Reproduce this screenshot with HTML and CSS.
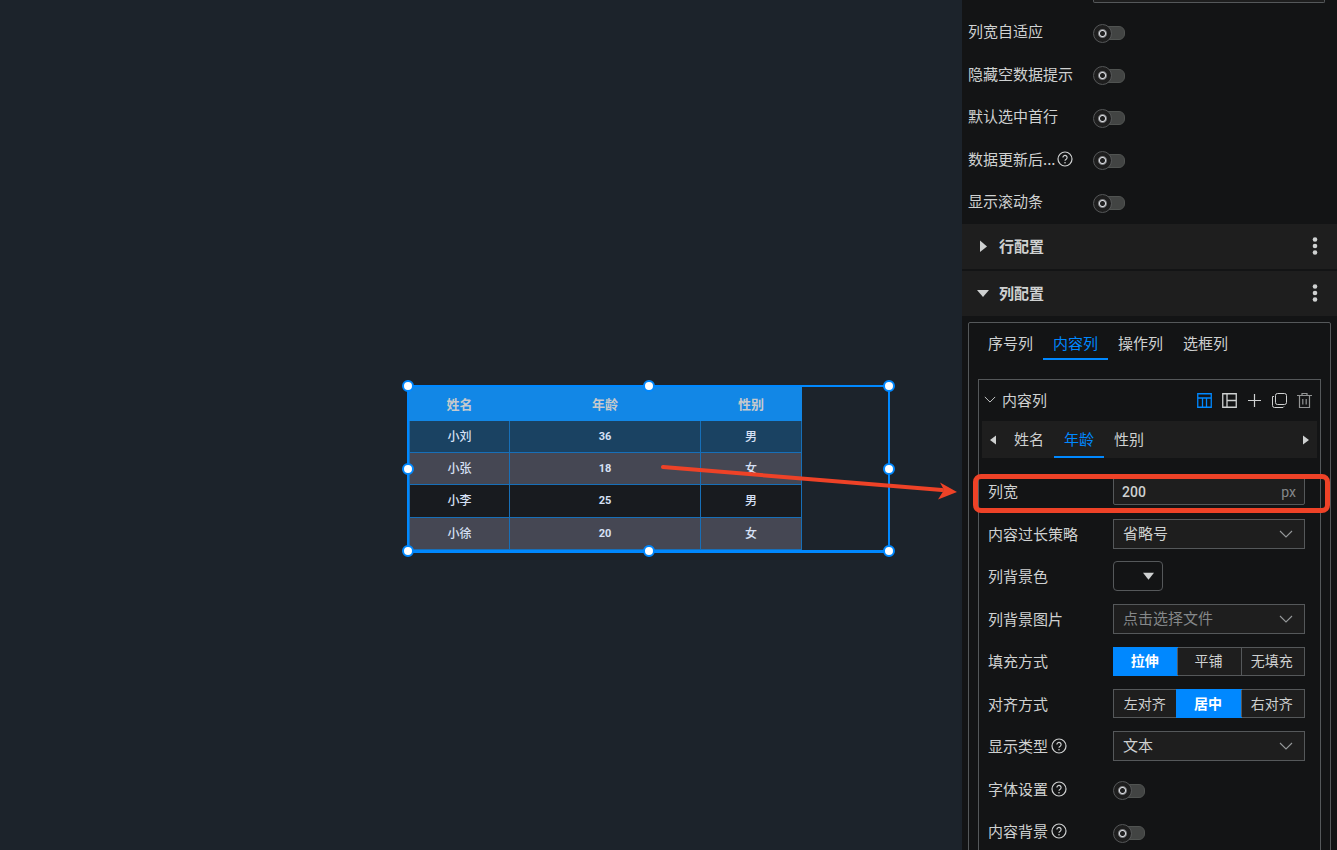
FILE: index.html
```html
<!DOCTYPE html>
<html lang="zh-CN">
<head>
<meta charset="utf-8">
<title>列配置</title>
<link rel="stylesheet" href="styles.css">
</head>
<body>
<svg class="defs" aria-hidden="true">
  <symbol id="help" viewBox="0 0 16 16"><circle cx="8" cy="8" r="7" fill="none" stroke="currentColor" stroke-width="1.2"/><path d="M5.9 6.5a2.1 2.1 0 1 1 3.3 1.7c-.8.5-1.2.8-1.2 1.6" fill="none" stroke="currentColor" stroke-width="1.2"/><circle cx="8" cy="11.8" r=".8" fill="currentColor"/></symbol>
  <symbol id="chevron" viewBox="0 0 14 8"><path d="M1 1l6 6 6-6" fill="none" stroke="currentColor" stroke-width="1.1"/></symbol>
  <symbol id="dots" viewBox="0 0 6 18"><circle cx="3" cy="2.5" r="2.3" fill="currentColor"/><circle cx="3" cy="9" r="2.3" fill="currentColor"/><circle cx="3" cy="15.5" r="2.3" fill="currentColor"/></symbol>
</svg>
<div class="app">
  <main class="canvas">
    <div class="widget">
      <table class="grid">
        <colgroup><col class="c-name"><col class="c-age"><col class="c-sex"></colgroup>
        <thead><tr><th>姓名</th><th>年龄</th><th>性别</th></tr></thead>
        <tbody>
          <tr class="picked"><td>小刘</td><td>36</td><td>男</td></tr>
          <tr class="even"><td>小张</td><td>18</td><td>女</td></tr>
          <tr class="odd"><td>小李</td><td>25</td><td>男</td></tr>
          <tr class="even"><td>小徐</td><td>20</td><td>女</td></tr>
        </tbody>
      </table>
      <i class="handle t l"></i><i class="handle t m"></i><i class="handle t r"></i>
      <i class="handle c l"></i><i class="handle c r"></i>
      <i class="handle b l"></i><i class="handle b m"></i><i class="handle b r"></i>
    </div>
    <svg class="arrow" viewBox="0 0 304 50" aria-hidden="true"><path d="M5 17L284 40" stroke="#ee4227" stroke-width="4" stroke-linecap="round"/><path d="M299 42L282 32.500L286 40L280 49.500Z" fill="#ee4227"/></svg>
  </main>

  <aside class="panel">
    <div class="stub"></div>
    <div class="rows outer">
      <div class="row"><label for="s1">列宽自适应</label><input class="switch" type="checkbox" id="s1"></div>
      <div class="row"><label for="s2">隐藏空数据提示</label><input class="switch" type="checkbox" id="s2"></div>
      <div class="row"><label for="s3">默认选中首行</label><input class="switch" type="checkbox" id="s3"></div>
      <div class="row"><label for="s4">数据更新后...<svg class="help"><use href="#help"/></svg></label><input class="switch" type="checkbox" id="s4"></div>
      <div class="row"><label for="s5">显示滚动条</label><input class="switch" type="checkbox" id="s5"></div>
    </div>

    <div class="section">
      <button class="fold"><svg viewBox="0 0 12 12"><path d="M3 .5L10 6.500L3 12Z" fill="currentColor"/></svg>行配置</button>
      <button class="more" aria-label="更多"><svg><use href="#dots"/></svg></button>
    </div>
    <div class="section">
      <button class="fold"><svg viewBox="0 0 12 12"><path d="M0 3H12L6 10Z" fill="currentColor"/></svg>列配置</button>
      <button class="more" aria-label="更多"><svg><use href="#dots"/></svg></button>
    </div>

    <div class="box">
      <div class="tabs">
        <button>序号列</button><button class="on">内容列</button><button>操作列</button><button>选框列</button>
      </div>
      <div class="inner">
        <div class="head">
          <button class="title"><svg><use href="#chevron"/></svg>内容列</button>
          <div class="tools">
            <button class="blue" aria-label="横向"><svg viewBox="0 0 15 15"><path d="M.75.75h13.500v13.500H.75zM.75 5h13.500M5.500 5v9M9.500 5v9" fill="none" stroke="currentColor" stroke-width="1.300"/></svg></button>
            <button aria-label="纵向"><svg viewBox="0 0 15 15"><path d="M.75.75h13.500v13.500H.75zM5 .75v13.500M5 7.500h9" fill="none" stroke="currentColor" stroke-width="1.300"/></svg></button>
            <button aria-label="添加"><svg viewBox="0 0 15 15"><path d="M7.500 1v13M1 7.500h13" stroke="currentColor" stroke-width="1.200"/></svg></button>
            <button aria-label="复制"><svg viewBox="0 0 15 15"><rect x="3.500" y=".5" width="11" height="11" rx="2" fill="none" stroke="currentColor"/><path d="M2 3.500H.5v9q0 2 2 2h8.500l1-1" fill="none" stroke="currentColor"/></svg></button>
            <button class="dim" aria-label="删除"><svg viewBox="0 0 15 15"><path d="M0 2.500h15M5 2.500V.5h5v2M2.500 2.500v12h10v-12M5.800 6v5.500M9.200 6v5.500" fill="none" stroke="currentColor" stroke-width="1.200"/></svg></button>
          </div>
        </div>
        <div class="strip">
          <button class="step" aria-label="上一个"><svg viewBox="0 0 6 10"><path d="M6 .5v9L0 5Z" fill="currentColor"/></svg></button>
          <div class="names"><button>姓名</button><button class="on">年龄</button><button>性别</button></div>
          <button class="step" aria-label="下一个"><svg viewBox="0 0 6 10"><path d="M0 .5v9L6 5Z" fill="currentColor"/></svg></button>
        </div>
        <div class="rows">
          <div class="row marked"><label for="w">列宽</label><span class="field num"><input id="w" value="200"><span class="unit">px</span></span></div>
          <div class="row"><label for="o">内容过长策略</label><span class="field"><select id="o"><option>省略号</option></select><svg><use href="#chevron"/></svg></span></div>
          <div class="row"><label for="bg">列背景色</label><button id="bg" class="colour"><svg viewBox="0 0 12 8"><path d="M0 .5h12L6 8Z" fill="currentColor"/></svg></button></div>
          <div class="row"><label for="img">列背景图片</label><span class="field"><select id="img" class="empty"><option>点击选择文件</option></select><svg><use href="#chevron"/></svg></span></div>
          <div class="row"><span class="label">填充方式</span><div class="seg"><button class="on">拉伸</button><button>平铺</button><button>无填充</button></div></div>
          <div class="row"><span class="label">对齐方式</span><div class="seg"><button>左对齐</button><button class="on">居中</button><button>右对齐</button></div></div>
          <div class="row"><label for="t">显示类型<svg class="help"><use href="#help"/></svg></label><span class="field"><select id="t"><option>文本</option></select><svg><use href="#chevron"/></svg></span></div>
          <div class="row"><label for="f">字体设置<svg class="help"><use href="#help"/></svg></label><input class="switch" type="checkbox" id="f"></div>
          <div class="row"><label for="cb">内容背景<svg class="help"><use href="#help"/></svg></label><input class="switch" type="checkbox" id="cb"></div>
        </div>
      </div>
    </div>
  </aside>
</div>
</body>
</html>
```

FILE: styles.css
```css
* { box-sizing: border-box; }
body { margin: 0; font: 15px/20px "Noto Sans CJK SC", sans-serif; color: #cfd1d1; background: #131415; }
button, input, select { font: inherit; color: inherit; margin: 0; }
button { padding: 0; border: 0; background: none; cursor: pointer; }
svg { display: block; flex: none; }
.defs { position: absolute; width: 0; height: 0; }
.app { display: flex; height: 100vh; overflow: hidden; }

.canvas { flex: 1; position: relative; background: #1c232b; overflow: hidden; }
.widget { position: absolute; left: 407px; top: 385px; width: 483px; height: 168px; border: 2px solid #0088ff; border-bottom-width: 3px; }
.grid { border-collapse: collapse; table-layout: fixed; width: 392px; font-size: 12px; line-height: 16px; text-align: center; color: #d6e0f5; }
.c-name { width: 100px; }
.c-age { width: 191px; }
.c-sex { width: 101px; }
.grid th, .grid td { padding: 0; border: 1px solid #176fb8; }
.grid th { height: 33px; font-size: 13px; font-weight: 700; color: #c6cacd; background: #1287e6; border-color: #1287e6; }
.grid td { height: 32px; font-family: Roboto, "Noto Sans CJK SC", sans-serif; font-weight: 500; font-size: 12px; background: #181b1f; }
.grid td:nth-child(2) { font-size: 11px; font-weight: 700; }
.grid .picked td { background: #1a4262; }
.grid .even td { background: #454753; }
.grid .odd td { height: 33px; }
.handle { position: absolute; width: 12px; height: 12px; margin: -6px; border: 2px solid #0088ff; border-radius: 50%; background: #fff; }
.t { top: -1px; }
.c { top: 50%; }
.b { bottom: -1px; }
.l { left: -1px; }
.m { left: 50%; }
.r { right: -1px; }
.arrow { position: absolute; right: 0; top: 450px; width: 304px; height: 50px; }

.panel { width: 375px; flex: none; }
.stub { height: 3px; margin: 0 12px 7px 131px; border: 1px solid #55585a; border-top: 0; border-radius: 0 0 2px 2px; background: #1e1e1e; }
.rows { display: grid; grid-auto-rows: 42px 43px; }
.outer { padding: 0 6px; margin-bottom: 2px; }
.row { display: grid; grid-template-columns: 125px 1fr; align-items: center; position: relative; }
.row label, .label { display: flex; align-items: center; gap: 3px; white-space: nowrap; }
.outer label { gap: 1px; }
.help { width: 16px; height: 16px; }

.switch { appearance: none; display: grid; align-items: center; width: 32px; height: 17px; margin-top: 2px; cursor: pointer; }
.switch::before { content: ""; grid-area: 1 / 1; height: 12px; margin-left: 8px; border: 1px solid #505351; border-radius: 6px; background: #424443; }
.switch::after { content: ""; grid-area: 1 / 1; width: 17px; height: 17px; border: 1px solid #555758; border-radius: 50%; background: radial-gradient(circle, #1e1e1e 2px, #d8dadf 3px, #d8dadf 3px, #1e1e1e 5px); }

.section { display: flex; justify-content: space-between; align-items: center; height: 45px; margin-bottom: 2px; padding: 0 19px 2px 15px; background: #1e1e1e; }
.fold { display: flex; align-items: center; gap: 10px; font-weight: 700; }
.fold svg { width: 12px; height: 12px; }
.more svg { width: 6px; height: 18px; }

.box { margin: 6px 6px 0; border: 1px solid #55585a; border-radius: 2px; padding: 0 9px; }
.section + .box { margin-top: 6px; }
.tabs { display: flex; height: 37px; margin-bottom: 19px; }
.tabs button { padding: 5px 10px 0; border-bottom: 2px solid transparent; }
.tabs .on, .names .on { color: #0088ff; border-color: #0088ff; }
.inner { border: 1px solid #55585a; }
.head { display: flex; justify-content: space-between; align-items: center; height: 41px; padding: 0 8px 0 5px; }
.title { display: flex; align-items: center; gap: 6px; padding-bottom: 2px; }
.title svg { width: 12px; height: 7px; }
.tools { display: flex; gap: 10px; }
.tools svg { width: 15px; height: 15px; }
.blue { color: #0088ff; }
.dim { color: #929494; }
.strip { display: flex; align-items: center; height: 37px; margin: 0 3px 12px; padding: 0 8px; background: #1e1e1e; }
.step svg { width: 6px; height: 10px; }
.names { display: flex; flex: 1; height: 37px; margin-left: 8px; }
.names button { padding: 0 10px; border-bottom: 2px solid transparent; }

.inner .rows { padding: 0 15px 0 9px; }
.marked::after { content: ""; position: absolute; inset: 4px -25px -1px -15px; border: 5px solid #ee4227; border-radius: 8px; pointer-events: none; }
.field { display: grid; align-items: center; height: 30px; border: 1px solid #55585a; background: #1e1e1e; }
.field > * { grid-area: 1 / 1; }
.field svg { justify-self: end; width: 14px; height: 8px; margin-right: 11px; color: #96999b; pointer-events: none; }
.field input, .field select { appearance: none; width: 100%; height: 28px; padding: 0 9px 2px; border: 0; background: none; outline: 0; }
.field .empty { color: #85888a; }
.num { height: 28px; border-radius: 2px; font-family: Roboto, sans-serif; }
.num input { height: 26px; padding: 2px 8px 0; font-size: 14px; font-weight: 500; }
.unit { justify-self: end; margin-right: 8px; padding-top: 2px; font-size: 14px; color: #85888a; }
.colour { display: flex; align-items: center; justify-content: flex-end; width: 50px; height: 30px; padding-right: 8px; border: 1px solid #55585a; border-radius: 4px; }
.colour svg { width: 11px; height: 8px; }
.seg { display: grid; grid-template-columns: repeat(3, 1fr); height: 29px; border: 1px solid #55585a; background: #1e1e1e; font-size: 14px; }
.seg button { padding: 0 2px 2px 0; }
.seg button + button { border-left: 1px solid #55585a; }
.seg .on, .seg button.on { margin: -1px; border: 0; background: #0088ff; color: #fff; font-weight: 700; }
```
